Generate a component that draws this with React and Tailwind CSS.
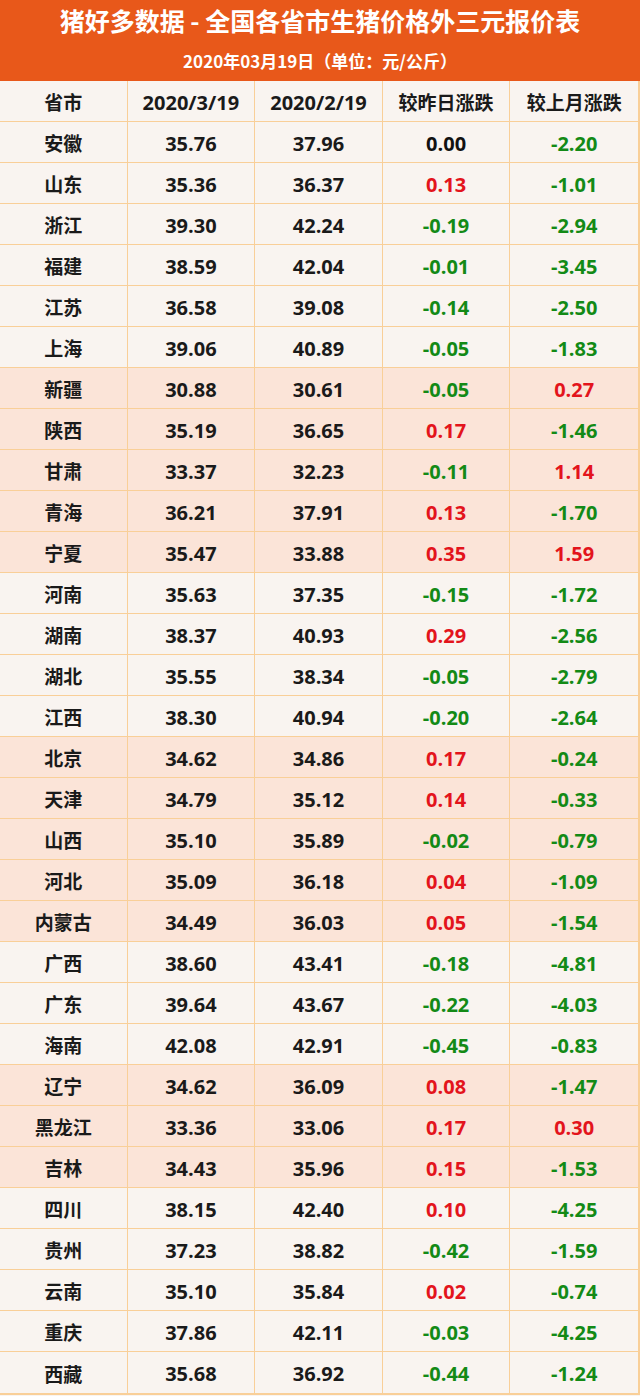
const rows = [
  ['安徽', '35.76', '37.96', '0.00', '-2.20', 0],
  ['山东', '35.36', '36.37', '0.13', '-1.01', 0],
  ['浙江', '39.30', '42.24', '-0.19', '-2.94', 0],
  ['福建', '38.59', '42.04', '-0.01', '-3.45', 0],
  ['江苏', '36.58', '39.08', '-0.14', '-2.50', 0],
  ['上海', '39.06', '40.89', '-0.05', '-1.83', 0],
  ['新疆', '30.88', '30.61', '-0.05', '0.27', 1],
  ['陕西', '35.19', '36.65', '0.17', '-1.46', 1],
  ['甘肃', '33.37', '32.23', '-0.11', '1.14', 1],
  ['青海', '36.21', '37.91', '0.13', '-1.70', 1],
  ['宁夏', '35.47', '33.88', '0.35', '1.59', 1],
  ['河南', '35.63', '37.35', '-0.15', '-1.72', 0],
  ['湖南', '38.37', '40.93', '0.29', '-2.56', 0],
  ['湖北', '35.55', '38.34', '-0.05', '-2.79', 0],
  ['江西', '38.30', '40.94', '-0.20', '-2.64', 0],
  ['北京', '34.62', '34.86', '0.17', '-0.24', 1],
  ['天津', '34.79', '35.12', '0.14', '-0.33', 1],
  ['山西', '35.10', '35.89', '-0.02', '-0.79', 1],
  ['河北', '35.09', '36.18', '0.04', '-1.09', 1],
  ['内蒙古', '34.49', '36.03', '0.05', '-1.54', 1],
  ['广西', '38.60', '43.41', '-0.18', '-4.81', 0],
  ['广东', '39.64', '43.67', '-0.22', '-4.03', 0],
  ['海南', '42.08', '42.91', '-0.45', '-0.83', 0],
  ['辽宁', '34.62', '36.09', '0.08', '-1.47', 1],
  ['黑龙江', '33.36', '33.06', '0.17', '0.30', 1],
  ['吉林', '34.43', '35.96', '0.15', '-1.53', 1],
  ['四川', '38.15', '42.40', '0.10', '-4.25', 0],
  ['贵州', '37.23', '38.82', '-0.42', '-1.59', 0],
  ['云南', '35.10', '35.84', '0.02', '-0.74', 0],
  ['重庆', '37.86', '42.11', '-0.03', '-4.25', 0],
  ['西藏', '35.68', '36.92', '-0.44', '-1.24', 0],
]

// colour for change columns: up red, down green, flat black
function tone(v) {
  if (v.startsWith('-')) return 'text-[#138a16]'
  if (v === '0.00') return 'text-[#111]'
  return 'text-[#e3141c]'
}

const cjk = { fontFamily: '"Noto Sans CJK SC", sans-serif' }

function Cell({ children, className = '', zh }) {
  return (
    <div
      className={`flex items-center justify-center pt-[3px] border-r border-[#f9cf98] last:border-r-0 ${zh ? 'text-[19px]' : 'text-[20px]'} ${className}`}
      style={zh ? cjk : undefined}
    >
      {children}
    </div>
  )
}

export default function App() {
  return (
    <div
      className="w-[640px] h-[1396px] bg-[#f9f4f0] overflow-hidden"
      style={{ fontFamily: '"Open Sans", "Noto Sans CJK SC", sans-serif' }}
    >
      <div className="h-[81px] bg-[#e8581a] flex flex-col items-center text-white font-bold" style={cjk}>
        <div className="text-[25px] leading-none mt-[8px]">
          猪好多数据 - 全国各省市生猪价格外三元报价表
        </div>
        <div className="text-[17px] leading-none mt-[19px]">
          2020年03月19日（单位：元/公斤）
        </div>
      </div>

      <div className="border-r-2 border-b-2 border-[#f9cf98]">
        <div className="grid grid-cols-5 h-[41px] border-b border-[#f9cf98] font-bold text-[#1a1a1a]">
          <Cell zh>省市</Cell>
          <Cell>2020/3/19</Cell>
          <Cell>2020/2/19</Cell>
          <Cell zh>较昨日涨跌</Cell>
          <Cell zh>较上月涨跌</Cell>
        </div>
        {rows.map(([name, a, b, d, m, hi]) => (
          <div
            key={name}
            className={`grid grid-cols-5 h-[41px] border-b border-[#f9cf98] last:border-b-0 font-bold text-[#1a1a1a] ${hi ? 'bg-[#fbe4d8]' : ''}`}
          >
            <Cell zh>{name}</Cell>
            <Cell>{a}</Cell>
            <Cell>{b}</Cell>
            <Cell className={tone(d)}>{d}</Cell>
            <Cell className={tone(m)}>{m}</Cell>
          </div>
        ))}
      </div>
    </div>
  )
}
